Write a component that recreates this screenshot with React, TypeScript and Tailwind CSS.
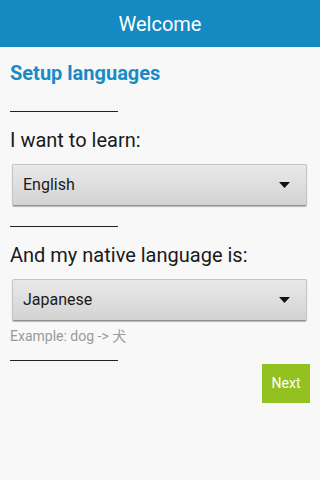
const Spinner = ({ value }: { value: string }) => (
  <div className="ml-[2px] mr-[3px] h-[42px] flex items-center justify-between pl-[10px] pr-[16px] rounded-[2px] border border-[#c4c4c4] border-b-[#8f8f8f] bg-gradient-to-b from-[#e9e9e9] to-[#d3d3d3] shadow-[0_1px_1px_rgba(0,0,0,0.25)]">
    <span className="text-[16px] text-[#1a1a1a]">{value}</span>
    <svg width="11" height="6" viewBox="0 0 11 6">
      <polygon points="0,0 11,0 5.5,6" fill="#111" />
    </svg>
  </div>
);

const Rule = () => <div className="h-px w-[108px] bg-[#222]" />;

export default function App() {
  return (
    <div className="w-[320px] h-[480px] bg-[#f8f8f8] font-['Roboto',sans-serif]">
      <div className="h-[47px] bg-[#1589c1] flex items-center justify-center text-white text-[20px]">
        Welcome
      </div>
      <div className="px-[10px] flex flex-col">
        <h1 className="mt-[14px] text-[20px] leading-[24px] font-bold text-[#1a8ac5]">Setup languages</h1>
        <div className="mt-[26px]"><Rule /></div>
        <p className="mt-[14px] text-[20px] leading-[28px] text-[#1a1a1a]">I want to learn:</p>
        <div className="mt-[10px]"><Spinner value="English" /></div>
        <div className="mt-[20px]"><Rule /></div>
        <p className="mt-[14px] text-[20px] leading-[28px] text-[#1a1a1a]">And my native language is:</p>
        <div className="mt-[10px]"><Spinner value="Japanese" /></div>
        <p className="mt-[6px] text-[14px] leading-[18px] text-[#9a9a9a] font-['Roboto','Noto_Sans_CJK_JP',sans-serif]">Example: dog -&gt; 犬</p>
        <div className="mt-[15px]"><Rule /></div>
        <div className="mt-[3px] flex justify-end">
          <button className="w-[48px] h-[39px] bg-[#93c11f] text-white text-[14px]">Next</button>
        </div>
      </div>
    </div>
  );
}
